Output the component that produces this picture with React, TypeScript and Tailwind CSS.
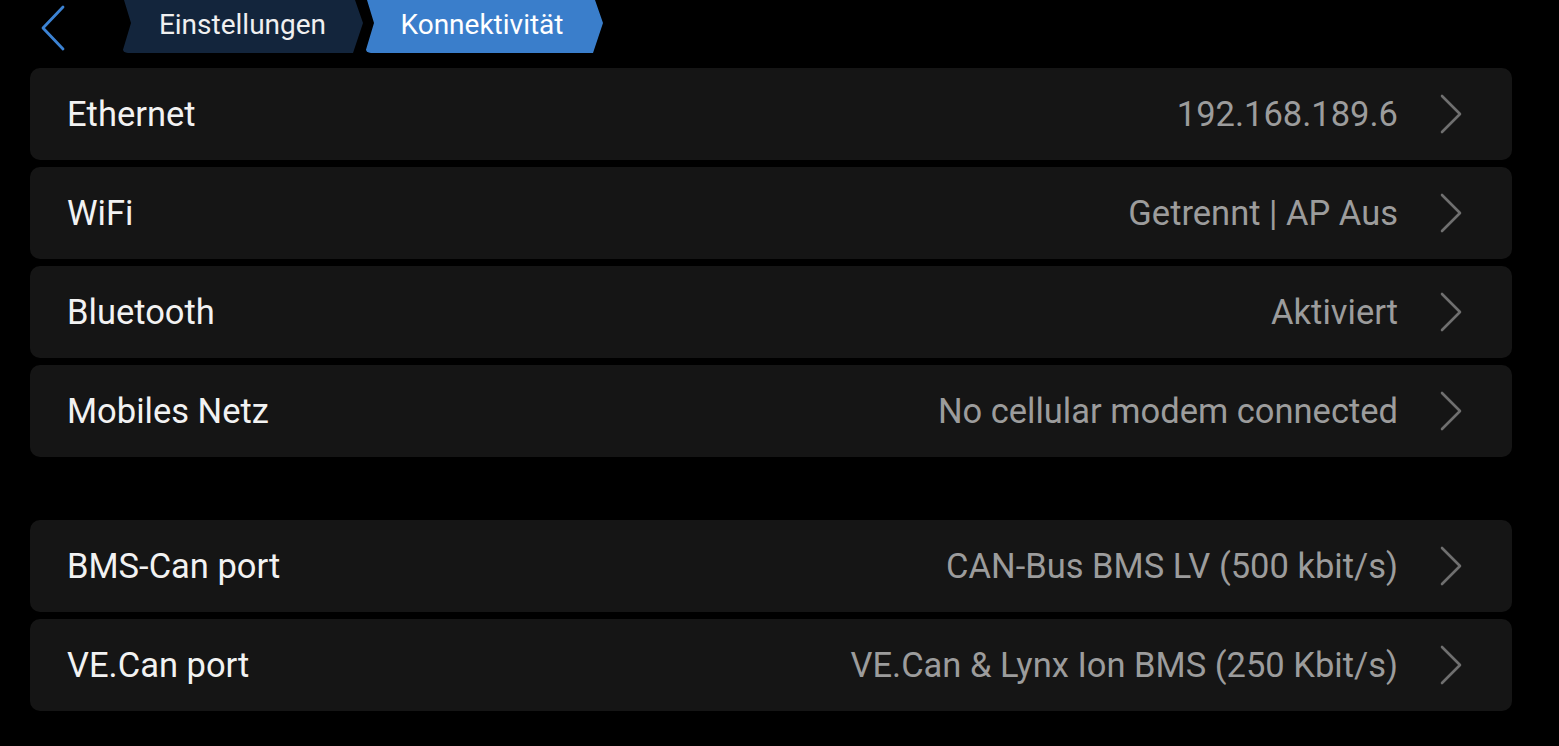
import React from "react";

const rows1 = [
  ["Ethernet", "192.168.189.6"],
  ["WiFi", "Getrennt | AP Aus"],
  ["Bluetooth", "Aktiviert"],
  ["Mobiles Netz", "No cellular modem connected"],
];
const rows2 = [
  ["BMS-Can port", "CAN-Bus BMS LV (500 kbit/s)"],
  ["VE.Can port", "VE.Can & Lynx Ion BMS (250 Kbit/s)"],
];

function Chevron() {
  return (
    <svg width="24" height="40" viewBox="0 0 24 40" className="shrink-0">
      <polyline points="3,2 21,20 3,38" fill="none" stroke="#6f6f6f" strokeWidth="2.6" strokeLinecap="round" strokeLinejoin="round" />
    </svg>
  );
}

function Row({ label, value }: { label: string; value: string }) {
  return (
    <div className="flex h-[92px] items-center rounded-[10px] bg-[#151515] pl-[37px] pr-[49px]">
      <span className="flex-1 pt-[2px] text-[34.5px] text-[#f2f2f2]">{label}</span>
      <span className="mr-[41px] pt-[2px] text-[34.5px] text-[#9c9c9c]">{value}</span>
      <Chevron />
    </div>
  );
}

export default function App() {
  return (
    <div className="h-[746px] w-[1559px] overflow-hidden bg-black font-['Roboto',sans-serif]">
      <div className="flex h-[53px] items-center">
        <svg width="30" height="46" viewBox="0 0 30 46" className="ml-[40px] mt-[2px] shrink-0">
          <polyline points="23,2 3,23 23,44" fill="none" stroke="#3c83d4" strokeWidth="2.8" strokeLinecap="round" strokeLinejoin="round" />
        </svg>
        <div className="ml-[52px] flex h-[53px] w-[241px] items-center justify-center rounded-b-[6px] bg-[#13253c] pb-[4px] text-[28px] text-[#f0f0f0] [clip-path:polygon(2px_0,calc(100%-8px)_0,100%_23px,calc(100%-10px)_100%,0_100%,9px_23px)]">
          Einstellungen
        </div>
        <div className="ml-[2px] flex h-[53px] w-[238px] items-center justify-center rounded-b-[6px] bg-[#3a7ecb] pb-[4px] pr-[4px] text-[28px] text-white [clip-path:polygon(2px_0,calc(100%-8px)_0,100%_23px,calc(100%-10px)_100%,0_100%,9px_23px)]">
          Konnektivität
        </div>
      </div>
      <div className="mx-[30px] mt-[15px] flex w-[1482px] flex-col gap-[7px]">
        {rows1.map(([l, v]) => (
          <Row key={l} label={l} value={v} />
        ))}
      </div>
      <div className="mx-[30px] mt-[63px] flex w-[1482px] flex-col gap-[7px]">
        {rows2.map(([l, v]) => (
          <Row key={l} label={l} value={v} />
        ))}
      </div>
    </div>
  );
}
